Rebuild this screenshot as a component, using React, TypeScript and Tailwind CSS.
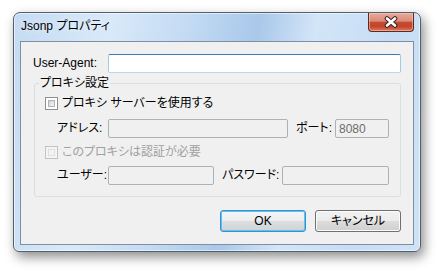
import React from "react";

const font =
  "[font-family:'Liberation_Sans','Noto_Sans_CJK_JP',sans-serif] [font-feature-settings:'palt']";

function CheckBox({ disabled }: { disabled?: boolean }) {
  return (
    <span
      className={
        disabled
          ? "w-[13px] h-[13px] shrink-0 border border-[#c3c3c3] bg-[#f4f4f4] p-[2px]"
          : "w-[13px] h-[13px] shrink-0 border border-[#8e8f8f] bg-white p-[2px]"
      }
    >
      <span
        className={
          disabled
            ? "block w-full h-full bg-[#f4f4f4] border border-[#e0e0e0]"
            : "block w-full h-full bg-[linear-gradient(135deg,#cbcfd5_0%,#e3e5e8_50%,#f6f6f6_100%)] border border-[#aeb3b9]"
        }
      />
    </span>
  );
}

function DisabledInput({ w, value }: { w: string; value?: string }) {
  return (
    <div
      className={`${w} h-[19px] border border-[#adb2b5] rounded-[2px] bg-[#f0f0f0] flex items-center pl-[3px] text-[#6d6d6d] text-[12px] leading-none`}
    >
      {value}
    </div>
  );
}

function Button({ children, def }: { children: React.ReactNode; def?: boolean }) {
  return (
    <button
      className={
        def
          ? "w-[86px] h-[22px] rounded-[3px] border border-[#3c8fd0] shadow-[inset_0_0_0_1px_#5fc3f2] bg-[linear-gradient(180deg,#f3f5f7_0%,#ebedef_50%,#dcdfe2_50%,#cfd3d6_100%)] text-[12px] text-black flex items-center justify-center"
          : "w-[86px] h-[22px] rounded-[3px] border border-[#707070] shadow-[inset_0_0_0_1px_#fcfcfc] bg-[linear-gradient(180deg,#f2f2f2_0%,#ebebeb_50%,#dddddd_50%,#cfcfcf_100%)] text-[12px] text-black flex items-center justify-center"
      }
    >
      {children}
    </button>
  );
}

export default function App() {
  return (
    <div className={`w-[439px] h-[271px] bg-white overflow-hidden pt-[12px] pl-[13px] ${font}`}>
      <div className="w-[408px] h-[240px] rounded-t-[7px] rounded-b-[6px] border border-[#52606e] bg-[linear-gradient(100deg,#c4dbf3_0%,#d9e9f9_22%,#c2daf3_40%,#a9c8ea_55%,#d3e5f8_68%,#c6ddf5_85%,#cfe3f7_100%)] shadow-[3px_5px_12px_rgba(0,0,0,0.45),inset_0_0_0_1px_rgba(255,255,255,0.55)] flex flex-col px-[6px] pb-[6px]">
        {/* title bar */}
        <div className="h-[28px] flex items-start justify-between">
          <span className="pt-[6px] pl-[1px] text-[12px] leading-[15px] text-black [text-shadow:0_0_6px_rgba(255,255,255,0.9)]">
            Jsonp プロパティ
          </span>
          <button className="w-[46px] h-[19px] rounded-b-[4px] border border-t-0 border-[#5b2a20] shadow-[inset_0_0_0_1px_rgba(255,210,200,0.5)] bg-[linear-gradient(180deg,#e8ab9c_0%,#dc8a78_45%,#c44b33_52%,#c3452c_75%,#dc7b5e_100%)] flex items-center justify-center">
            <svg width="14" height="12" viewBox="0 0 14 12">
              <path d="M3 2.5 L11 9.5 M11 2.5 L3 9.5" stroke="#3c2623" strokeWidth="4.6" strokeLinecap="round" />
              <path d="M3 2.5 L11 9.5 M11 2.5 L3 9.5" stroke="#ffffff" strokeWidth="2.6" strokeLinecap="round" />
            </svg>
          </button>
        </div>

        {/* client area */}
        <div className="flex-1 border border-[#7f8fa1] bg-[#f0f0f0] flex flex-col text-[12px] text-black">
          {/* user agent */}
          <div className="pt-[12px] pl-[12px] flex items-center">
            <span className="w-[75px] leading-[15px]">User-Agent:</span>
            <div className="w-[293px] h-[19px] border border-[#a4c9e3] border-t-[#3d7bad] border-b-[#b7d9ed] rounded-[2px] bg-white" />
          </div>

          {/* group box */}
          <fieldset className="ml-[13px] mr-[12px] mt-[3px] border border-[#d5dfe5] rounded-[3px] pb-[11px] flex flex-col">
            <legend className="ml-[4px] px-[1px] leading-[15px]">プロキシ設定</legend>

            <div className="pt-[6px] pl-[10px] flex items-center h-[19px] box-content -mt-[3px]">
              <CheckBox />
              <span className="ml-[4px] leading-[15px]">プロキシ サーバーを使用する</span>
            </div>

            <div className="mt-[6px] pl-[22px] flex items-center">
              <span className="w-[51px] leading-[15px]">アドレス:</span>
              <DisabledInput w="w-[180px]" />
              <span className="ml-[8px] w-[39px] leading-[15px]">ポート:</span>
              <DisabledInput w="w-[54px]" value="8080" />
            </div>

            <div className="mt-[8px] pl-[10px] flex items-center h-[13px]">
              <CheckBox disabled />
              <span className="ml-[4px] leading-[15px] text-[#a0a0a0]">このプロキシは認証が必要</span>
            </div>

            <div className="mt-[7px] pl-[22px] flex items-center">
              <span className="w-[51px] leading-[15px]">ユーザー:</span>
              <DisabledInput w="w-[106px]" />
              <span className="ml-[8px] w-[60px] leading-[15px]">パスワード:</span>
              <DisabledInput w="w-[107px]" />
            </div>
          </fieldset>

          {/* buttons */}
          <div className="mt-[13px] pr-[12px] flex justify-end gap-[9px]">
            <Button def>OK</Button>
            <Button>キャンセル</Button>
          </div>
        </div>
      </div>
    </div>
  );
}
